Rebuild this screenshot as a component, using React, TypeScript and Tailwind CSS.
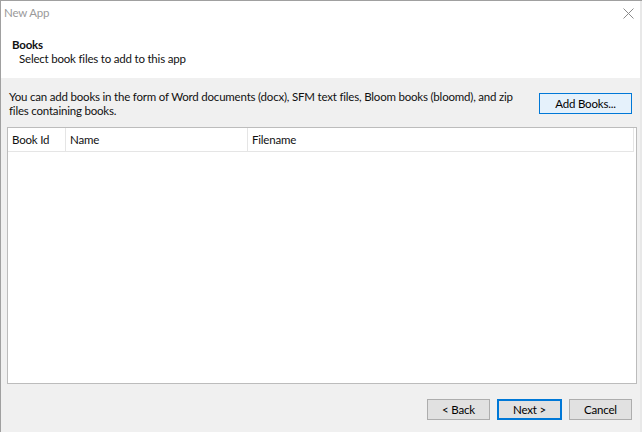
import React from 'react';

const font = "font-['Lato','Noto_Sans','Liberation_Sans',sans-serif]";

function Button({ label, kind }: { label: string; kind?: 'hover' | 'default' }) {
  const style =
    kind === 'hover'
      ? 'border border-[#0078d7] bg-[#e5f1fb]'
      : kind === 'default'
      ? 'border-2 border-[#0078d7] bg-[#e1e1e1]'
      : 'border border-[#adadad] bg-[#e1e1e1]';
  return (
    <button className={`h-[21px] flex items-center justify-center text-black leading-none ${style}`}>
      {label}
    </button>
  );
}

export default function App() {
  const columns = [
    { title: 'Book Id', width: 'w-[58px]' },
    { title: 'Name', width: 'w-[182px]' },
    { title: 'Filename', width: 'flex-1' },
  ];

  return (
    <div className={`w-[642px] h-[432px] bg-[#f0f0f0] border-l border-t border-[#a0a0a0] flex flex-col overflow-hidden ${font} text-[11.5px] tracking-[-0.2px] text-[#111]`}>
      {/* title + header */}
      <div className="bg-white h-[77px] flex flex-col border-r-2 border-[#e8e8e8]">
        <div className="h-[27px] flex items-center justify-between pl-[3px] pr-[7px] pb-[3px]">
          <span className="text-[#9a9a9a]">New App</span>
          <svg width="11" height="11" viewBox="0 0 11 11" className="mr-[-1px] mt-[1px]">
            <path d="M0.5 0.5 L10.5 10.5 M10.5 0.5 L0.5 10.5" stroke="#8a8a8a" strokeWidth="1" />
          </svg>
        </div>
        <div className="pl-[11px] pt-[10px]">
          <div className="font-bold leading-[14px]">Books</div>
          <div className="pl-[7px] leading-[14px]">Select book files to add to this app</div>
        </div>
      </div>

      {/* body */}
      <div className="flex-1 flex flex-col pl-[6px] pr-[3px] border-r-2 border-[#e8e8e8]">
        <div className="flex justify-between items-start pt-[12px]">
          <p className="pl-[2px] leading-[14px] whitespace-nowrap">
            You can add books in the form of Word documents (docx), SFM text files, Bloom books (bloomd), and zip
            <br />
            files containing books.
          </p>
          <div className="w-[93px] shrink-0 mt-[3px] mr-[5px] flex flex-col">
            <Button label="Add Books..." kind="hover" />
          </div>
        </div>

        <div className="mt-[9px] h-[257px] border border-[#bcbcbc] bg-white flex flex-col">
          <div className="h-[24px] flex border-b border-[#e5e5e5] mr-[2px]">
            {columns.map((c) => (
              <div key={c.title} className={`${c.width} flex items-center pl-[4px] border-r border-[#e5e5e5]`}>
                {c.title}
              </div>
            ))}
          </div>
        </div>

        <div className="flex justify-end gap-[7px] mt-[15px] pr-[5px]">
          <div className="w-[63px] flex flex-col">
            <Button label="< Back" />
          </div>
          <div className="w-[65px] flex flex-col">
            <Button label="Next >" kind="default" />
          </div>
          <div className="w-[63px] flex flex-col">
            <Button label="Cancel" />
          </div>
        </div>
      </div>
    </div>
  );
}
